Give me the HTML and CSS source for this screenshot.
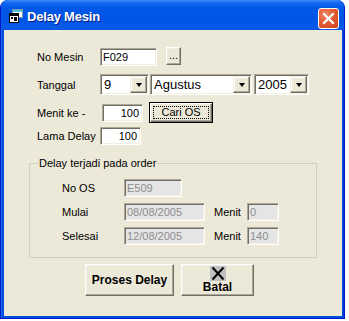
FILE: index.html
```html
<!DOCTYPE html>
<html>
<head>
<meta charset="utf-8">
<link rel="stylesheet" href="styles.css">
</head>
<body>
<div class="window">
  <div class="titlebar">
    <svg class="app-icon" width="16" height="16" viewBox="0 0 16 16">
      <rect x="4.5" y="1.5" width="10" height="8" fill="#fff" stroke="#7a9ab0"/>
      <rect x="5" y="2" width="9" height="2" fill="#4fc3d9"/>
      <rect x="1.5" y="5.5" width="9" height="9" fill="#fff" stroke="#000"/>
      <rect x="2" y="6" width="8" height="2" fill="#000"/>
      <rect x="3" y="9" width="2" height="2" fill="#000"/>
      <rect x="6" y="9" width="3" height="4" fill="#000"/>
    </svg>
    <span class="title">Delay Mesin</span>
    <span class="close">
      <svg width="13" height="13" viewBox="0 0 13 13"><path d="M2 2 L11 11 M11 2 L2 11" stroke="#fff" stroke-width="2.2" stroke-linecap="square"/></svg>
    </span>
  </div>
  <div class="client">
    <div class="row r1">
      <span class="lbl">No Mesin</span>
      <div class="tb w-mesin">F029</div>
      <div class="btn dots">...</div>
    </div>
    <div class="row r2">
      <span class="lbl">Tanggal</span>
      <div class="combo w-day"><span class="val">9</span><span class="drop"><span class="tri"></span></span></div>
      <div class="combo w-month"><span class="val">Agustus</span><span class="drop"><span class="tri"></span></span></div>
      <div class="combo w-year"><span class="val">2005</span><span class="drop"><span class="tri"></span></span></div>
    </div>
    <div class="row r3">
      <span class="lbl">Menit ke -</span>
      <div class="tb num w-menit">100</div>
      <div class="btn default"><span class="focus">Cari OS</span></div>
    </div>
    <div class="row r4">
      <span class="lbl">Lama Delay</span>
      <div class="tb num w-lama">100</div>
    </div>
    <div class="group">
      <span class="group-title">Delay terjadi pada order</span>
      <div class="grow g1">
        <span class="glbl">No OS</span>
        <div class="tb dis w-os">E509</div>
      </div>
      <div class="grow g2">
        <span class="glbl">Mulai</span>
        <div class="tb dis w-date">08/08/2005</div>
        <span class="mlbl">Menit</span>
        <div class="tb dis w-min">0</div>
      </div>
      <div class="grow g3">
        <span class="glbl">Selesai</span>
        <div class="tb dis w-date">12/08/2005</div>
        <span class="mlbl">Menit</span>
        <div class="tb dis w-min">140</div>
      </div>
    </div>
    <div class="actions">
      <div class="btn big-btn proses">Proses Delay</div>
      <div class="btn big-btn batal">
        <svg class="x-icon" width="16" height="15" viewBox="0 0 16 15">
          <rect width="16" height="15" fill="#c0c0c0"/>
          <path d="M2.5 1.5 L13.5 13.5 M13.5 1.5 L2.5 13.5" stroke="#000" stroke-width="2"/>
        </svg>
        <span>Batal</span>
      </div>
    </div>
  </div>
</div>
</body>
</html>
```
FILE: styles.css
```css
html, body {
  margin: 0;
  padding: 0;
  background: #ffffff;
}
body {
  font-family: "Liberation Sans", Arial, sans-serif;
  font-size: 11px;
  color: #000;
}
.window {
  width: 345px;
  height: 319px;
  box-sizing: border-box;
  background: #0050e0;
  border-radius: 8px 8px 0 0;
  border-left: 1px solid #0019cf;
  border-right: 1px solid #0019cf;
  border-bottom: 1px solid #0019cf;
  padding: 0 2px 2px 3px;
  display: flex;
  flex-direction: column;
  box-shadow: inset 1px 0 #166aee, inset -1px 0 #0838d0;
}
.titlebar {
  height: 30px;
  margin: 0 -2px 0 -3px;
  border-radius: 7px 7px 0 0;
  background: linear-gradient(to bottom, #3a8cf8 0px, #1169f0 3px, #0058e8 8px, #0055e5 22px, #0b5be8 28px, #0a54dc 30px);
  display: flex;
  align-items: center;
  flex: none;
}
.app-icon {
  margin-left: 7px;
  margin-top: 2px;
  flex: none;
}
.title {
  margin-left: 3px;
  margin-top: 2px;
  color: #fff;
  font-weight: bold;
  font-size: 13px;
  text-shadow: 1px 1px #0a1e8a;
  letter-spacing: -0.2px;
}
.close {
  margin-left: auto;
  margin-right: 5px;
  margin-top: 7px;
  width: 21px;
  height: 21px;
  box-sizing: border-box;
  border: 1px solid #fff;
  border-radius: 3px;
  background: radial-gradient(circle at 35% 30%, #f08a6a 0%, #e35d33 45%, #c9421a 100%);
  display: flex;
  align-items: center;
  justify-content: center;
}
.client {
  flex: 1;
  background: #ece9d8;
  padding: 17px 0 0 33px;
  box-sizing: border-box;
}
.row {
  display: flex;
  align-items: center;
}
.lbl {
  width: 63px;
  flex: none;
  white-space: nowrap;
}
.r1 { height: 20px; }
.r2 { height: 21px; margin-top: 7px; }
.r3 { height: 21px; margin-top: 7px; }
.r4 { height: 20px; margin-top: 3px; }

.tb {
  box-sizing: border-box;
  height: 18px;
  border: 1px solid;
  border-color: #aca899 #fff #fff #aca899;
  box-shadow: inset 1px 1px #716f64, inset -1px -1px #f1efe2;
  background: #fff;
  padding: 0 2px 0 2px;
  line-height: 16px;
  white-space: nowrap;
  flex: none;
}
.num { text-align: right; padding-right: 3px; }
.w-mesin { width: 57px; }
.w-menit { width: 41px; margin-left: 2px; }
.w-lama { width: 41px; }
.dis {
  background: #e5e5e5;
  color: #8d8d8d;
}

.btn {
  box-sizing: border-box;
  border: 1px solid;
  border-color: #fff #716f64 #716f64 #fff;
  box-shadow: inset -1px -1px #aca899, inset 1px 1px #f1efe2;
  background: #ece9d8;
  display: flex;
  align-items: center;
  justify-content: center;
  flex: none;
}
.dots {
  width: 15px;
  height: 18px;
  margin-left: 9px;
  margin-top: -3px;
  line-height: 12px;
  align-items: flex-end;
  padding-bottom: 3px;
}
.default {
  margin-left: 6px;
  width: 64px;
  height: 21px;
  border: 1px solid #000;
  box-shadow: inset 1px 1px #fff, inset -1px -1px #716f64, inset -2px -2px #aca899;
}
.focus {
  border: 1px dotted #000;
  width: 56px;
  height: 13px;
  text-align: center;
  box-sizing: border-box;
  display: block;
  line-height: 11px;
}

.combo {
  box-sizing: border-box;
  height: 21px;
  border: 1px solid;
  border-color: #aca899 #fff #fff #aca899;
  box-shadow: inset 1px 1px #716f64, inset -1px -1px #f1efe2;
  background: #fff;
  display: flex;
  padding: 1px;
  flex: none;
  margin-right: 2px;
}
.combo .val {
  flex: 1;
  font-size: 13px;
  line-height: 17px;
  padding-left: 2px;
}
.w-day { width: 49px; }
.w-month { width: 102px; margin-left: -1px; }
.w-year { width: 55px; }
.drop {
  width: 17px;
  height: 17px;
  box-sizing: border-box;
  border: 1px solid;
  border-color: #f1efe2 #716f64 #716f64 #f1efe2;
  box-shadow: inset -1px -1px #aca899, inset 1px 1px #fff;
  background: #ece9d8;
  display: flex;
  align-items: center;
  justify-content: center;
  flex: none;
}
.tri {
  width: 0;
  height: 0;
  border-left: 3.5px solid transparent;
  border-right: 3.5px solid transparent;
  border-top: 4px solid #000;
  margin-top: 1px;
}

.group {
  position: relative;
  margin: 17px 0 0 -8px;
  width: 288px;
  box-sizing: border-box;
  border: 1px solid #d0d0bf;
  padding: 14px 0 11px 32px;
}
.group-title {
  position: absolute;
  left: 8px;
  top: -7px;
  padding: 0 1px;
  line-height: 13px;
  background: #ece9d8;
}
.grow {
  display: flex;
  align-items: center;
  height: 20px;
}
.g2, .g3 { margin-top: 4px; }
.glbl { width: 62px; flex: none; }
.w-os { width: 58px; }
.w-date { width: 81px; }
.mlbl { margin-left: 9px; width: 33px; flex: none; }
.w-min { width: 32px; }

.actions {
  display: flex;
  gap: 7px;
  margin: 6px 0 0 48px;
}
.big-btn {
  height: 32px;
  font-weight: bold;
  font-size: 12px;
}
.proses { width: 89px; }
.batal {
  width: 73px;
  flex-direction: column;
  justify-content: flex-start;
  padding-top: 1px;
}
.x-icon { display: block; }
.batal span { line-height: 13px; }
```
